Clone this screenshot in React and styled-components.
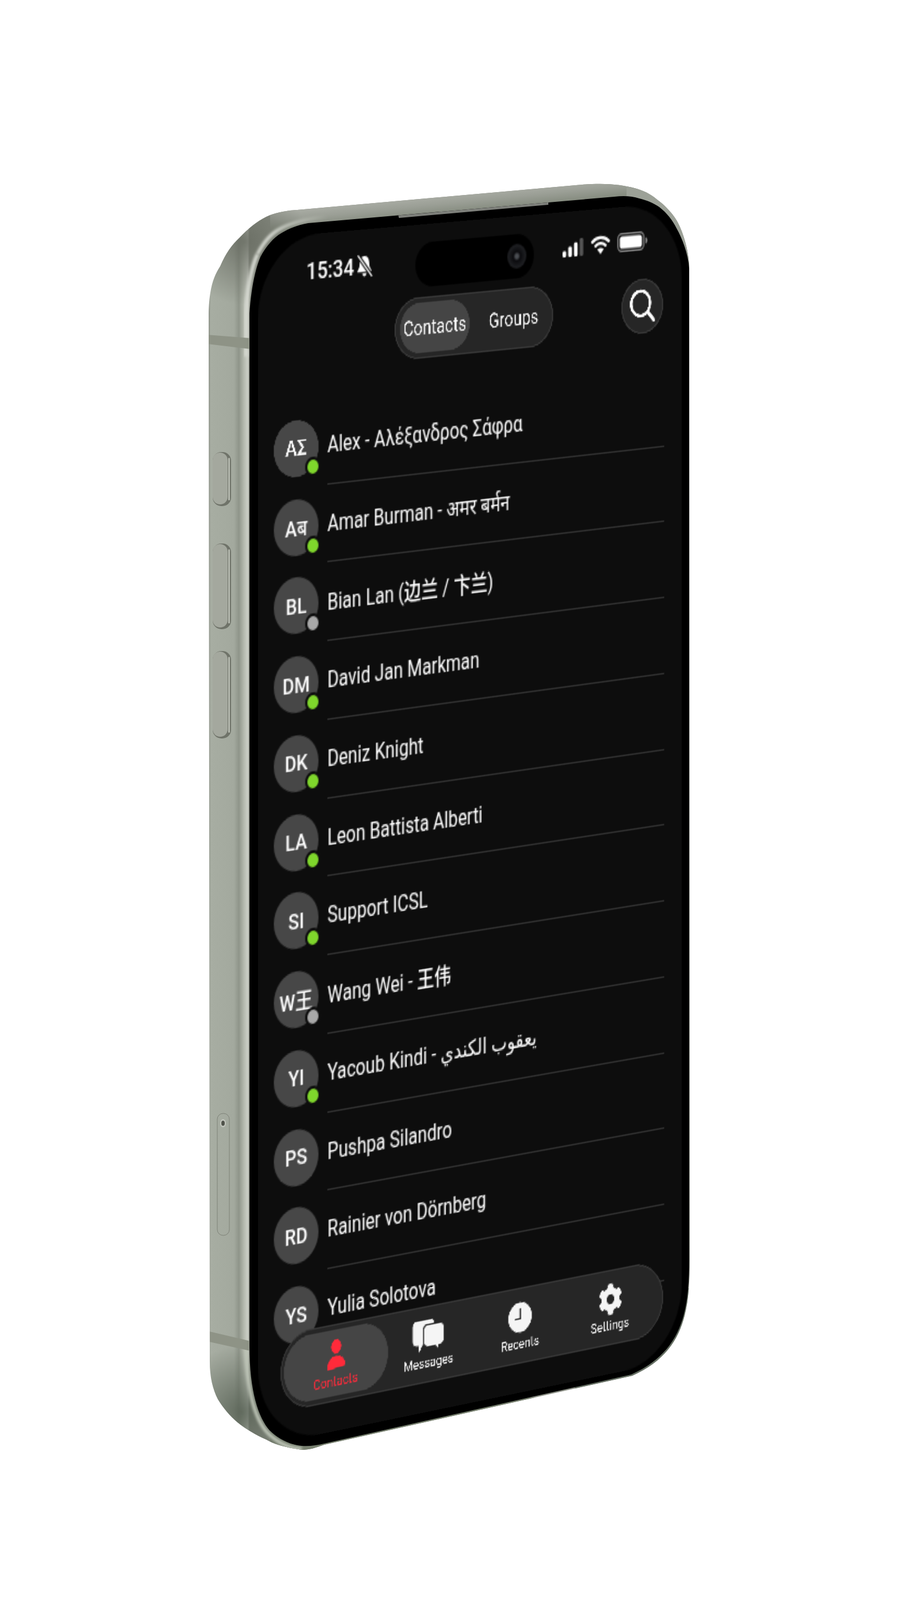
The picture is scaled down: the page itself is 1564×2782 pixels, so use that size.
import styled, { createGlobalStyle } from 'styled-components';
import { FaCog } from 'react-icons/fa';

const SCREEN_W = 393;
const SCREEN_H = 852;

// maps the flat 393x852 screen onto its corners in the photo (TL, TR, BR, BL)
function quadToMatrix(w, h, [x0, y0], [x1, y1], [x2, y2], [x3, y3]) {
  const dx1 = x1 - x2;
  const dx2 = x3 - x2;
  const sx = x0 - x1 + x2 - x3;
  const dy1 = y1 - y2;
  const dy2 = y3 - y2;
  const sy = y0 - y1 + y2 - y3;
  const den = dx1 * dy2 - dx2 * dy1;
  const g = (sx * dy2 - dx2 * sy) / den;
  const k = (dx1 * sy - sx * dy1) / den;
  const a = x1 - x0 + g * x1;
  const b = x3 - x0 + k * x3;
  const d = y1 - y0 + g * y1;
  const e = y3 - y0 + k * y3;
  return `matrix3d(${a / w},${d / w},0,${g / w},${b / h},${e / h},0,${k / h},0,0,1,0,${x0},${y0},0,1)`;
}

const screenTransform = quadToMatrix(
  SCREEN_W,
  SCREEN_H,
  [449, 415],
  [1186, 351],
  [1186, 2363],
  [449, 2516]
);

const GlobalStyle = createGlobalStyle`
  html, body {
    margin: 0;
    padding: 0;
    background: #fff;
  }
`;

const Stage = styled.div`
  position: relative;
  width: 1564px;
  height: 2782px;
  overflow: hidden;
  background: #fff;
`;

const PhoneArt = styled.svg`
  display: block;
  width: 1564px;
  height: 2782px;
`;

const Screen = styled.div`
  position: absolute;
  left: 0;
  top: 0;
  width: ${SCREEN_W}px;
  height: ${SCREEN_H}px;
  transform-origin: 0 0;
  transform: ${screenTransform};
  border-radius: 56px;
  overflow: hidden;
  background: #0d0d0d;
  color: #fff;
  font-family: Roboto, 'Noto Sans', 'Noto Sans CJK SC', 'DejaVu Sans', sans-serif;
`;

const StatusBar = styled.div`
  display: grid;
  grid-template-columns: 141.5px 110px 1fr;
  height: 52px;
`;

const TimeBlock = styled.div`
  display: flex;
  align-items: center;
  gap: 2px;
  height: 20px;
  margin-top: 16px;
  padding-left: 43px;
  font-size: 17px;
  font-weight: 500;
`;

const Island = styled.div`
  display: flex;
  align-items: center;
  justify-content: flex-end;
  height: 32px;
  margin-top: 13px;
  padding-right: 7px;
  border-radius: 17px;
  background: #000;
`;

const Lens = styled.div`
  width: 18px;
  height: 18px;
  border-radius: 50%;
  background: radial-gradient(circle at 50% 50%, #4a4d52 0 10%, #0b0b0e 26%, #1c1d20 60%, #0a0a0a 100%);
`;

const StatusIcons = styled.div`
  display: flex;
  align-items: center;
  gap: 7px;
  height: 14px;
  margin-top: 19px;
  padding-left: 27px;
`;

const Header = styled.div`
  display: grid;
  grid-template-columns: 1fr auto 1fr;
  align-items: start;
  height: 70.9px;
  padding: 0 18px;
`;

const Segmented = styled.div`
  grid-column: 2;
  display: flex;
  align-items: center;
  width: 147px;
  height: 44px;
  padding: 0 4px;
  box-sizing: border-box;
  border: 1px solid #3a3a3a;
  border-radius: 22px;
  background: #262626;
`;

const Segment = styled.div`
  display: flex;
  align-items: center;
  justify-content: center;
  flex: ${(props) => (props.$active ? '0 0 64px' : '1')};
  height: 36px;
  padding-left: ${(props) => (props.$active ? '0' : '9px')};
  border-radius: 18px;
  background: ${(props) => (props.$active ? '#454545' : 'transparent')};
  font-size: 14.5px;
`;

const SearchButton = styled.div`
  grid-column: 3;
  justify-self: end;
  display: flex;
  align-items: center;
  justify-content: center;
  width: 40px;
  height: 40px;
  margin-top: 2px;
  box-sizing: border-box;
  border: 1px solid #3a3a3a;
  border-radius: 50%;
  background: #262626;
`;

const List = styled.div`
  padding-left: 14px;
`;

const Row = styled.div`
  display: flex;
  align-items: center;
  height: 55.75px;
`;

const Avatar = styled.div`
  position: relative;
  flex: none;
  display: flex;
  align-items: center;
  justify-content: center;
  width: 40px;
  height: 40px;
  border-radius: 50%;
  background: #474747;
  font-size: 16px;
  font-weight: 500;
`;

const Presence = styled.span`
  position: absolute;
  right: -1.5px;
  bottom: -1px;
  width: 10px;
  height: 10px;
  border: 2px solid #0d0d0d;
  border-radius: 50%;
  background: ${(props) => (props.$online ? '#7fd62c' : '#a8a8a8')};
`;

const RowBody = styled.div`
  flex: 1;
  display: flex;
  align-items: center;
  align-self: stretch;
  margin: 0 17px 0 8px;
  border-bottom: 1px solid #343434;
  font-size: 15.7px;
  font-weight: 450;
  white-space: nowrap;
`;

const TabBar = styled.div`
  position: absolute;
  left: 19.5px;
  bottom: 21px;
  display: flex;
  align-items: center;
  width: 355px;
  height: 55px;
  padding: 0 2px;
  box-sizing: border-box;
  border: 1px solid #393939;
  border-radius: 28px;
  background: #262626;
`;

const Tab = styled.div`
  flex: none;
  display: flex;
  flex-direction: column;
  align-items: center;
  justify-content: center;
  gap: 2px;
  width: ${(props) => (props.$active ? '94px' : '85px')};
  height: 47px;
  margin-right: ${(props) => (props.$active ? '-5px' : '0')};
  border-radius: 24px;
  background: ${(props) => (props.$active ? '#454545' : 'transparent')};
  color: ${(props) => (props.$active ? '#ff2a3a' : '#fff')};
`;

const TabIcon = styled.div`
  display: flex;
  align-items: center;
  justify-content: center;
  height: 24px;
  color: ${(props) => (props.$active ? '#ff2a3a' : '#f5f5f5')};
`;

const TabLabel = styled.div`
  font-size: 10px;
  line-height: 11px;
`;

const contacts = [
  { initials: 'AΣ', name: 'Alex - Αλέξανδρος Σάφρα', status: 'online' },
  { initials: 'Aब', name: 'Amar Burman - अमर बर्मन', status: 'online' },
  { initials: 'BL', name: 'Bian Lan (边兰 / 卞兰)', status: 'away' },
  { initials: 'DM', name: 'David Jan Markman', status: 'online' },
  { initials: 'DK', name: 'Deniz Knight', status: 'online' },
  { initials: 'LA', name: 'Leon Battista Alberti', status: 'online' },
  { initials: 'SI', name: 'Support ICSL', status: 'online' },
  { initials: 'W王', name: 'Wang Wei - 王伟', status: 'away' },
  { initials: 'YI', name: 'Yacoub Kindi - يعقوب الكندي', status: 'online' },
  { initials: 'PS', name: 'Pushpa Silandro' },
  { initials: 'RD', name: 'Rainier von Dörnberg' },
  { initials: 'YS', name: 'Yulia Solotova' },
];

const SIDE_BUTTONS = [
  { y: 786, h: 94 },
  { y: 945, h: 149 },
  { y: 1132, h: 152 },
];

const BODY =
  'M363 545C364 500 372 480 383 463C393 440 403 426 417 413C432 397 447 385 463 377C480 369 500 366 517 365L1013 321C1050 318 1080 320 1107 328C1125 333 1135 340 1147 350C1160 360 1170 372 1177 383C1187 400 1197 430 1199 460L1200 2190C1200 2280 1190 2352 1100 2392L564 2512C550 2517 538 2521 525 2521C505 2518 480 2513 463 2503C445 2495 428 2485 413 2473C400 2462 388 2448 379 2433C370 2415 365 2395 365 2367Z';
const BEZEL =
  'M434 545C436 510 443 470 453 447C463 428 476 413 490 405C505 396 520 391 536 388L1069 342C1085 340 1100 341 1112 345C1125 348 1137 353 1147 360C1160 370 1170 383 1177 397C1187 415 1197 440 1199 467L1199 2190C1199 2278 1188 2350 1098 2390L564 2510C552 2513 538 2515 525 2514C505 2512 485 2503 469 2487C450 2465 434 2420 434 2340Z';

function Phone() {
  return (
    <PhoneArt viewBox="0 0 1564 2782" aria-hidden="true">
      <defs>
        <linearGradient id="rail" gradientUnits="userSpaceOnUse" x1="363" y1="0" x2="434" y2="0">
          <stop offset="0" stopColor="#8b9086" />
          <stop offset="0.05" stopColor="#a7ada2" />
          <stop offset="0.62" stopColor="#a3a99e" />
          <stop offset="0.74" stopColor="#8f958a" />
          <stop offset="0.86" stopColor="#b3b8ad" />
          <stop offset="0.96" stopColor="#cdd0c8" />
          <stop offset="1" stopColor="#8a8e84" />
        </linearGradient>
        <linearGradient id="topBand" gradientUnits="userSpaceOnUse" x1="780" y1="338" x2="783" y2="368">
          <stop offset="0" stopColor="#a9aca4" />
          <stop offset="0.5" stopColor="#9b9f96" />
          <stop offset="1" stopColor="#888e82" />
        </linearGradient>
        <linearGradient id="cornerGlint" gradientUnits="userSpaceOnUse" x1="470" y1="0" x2="570" y2="0">
          <stop offset="0" stopColor="#d3d6ce" />
          <stop offset="1" stopColor="#d3d6ce" stopOpacity="0" />
        </linearGradient>
        <radialGradient id="cornerTop" gradientUnits="userSpaceOnUse" cx="425" cy="420" r="110">
          <stop offset="0" stopColor="#666a60" stopOpacity="0.85" />
          <stop offset="1" stopColor="#666a60" stopOpacity="0" />
        </radialGradient>
        <radialGradient id="cornerBottom" gradientUnits="userSpaceOnUse" cx="420" cy="2455" r="115">
          <stop offset="0" stopColor="#566053" stopOpacity="0.85" />
          <stop offset="1" stopColor="#566053" stopOpacity="0" />
        </radialGradient>
        <filter id="soft" x="-20%" y="-20%" width="140%" height="140%">
          <feGaussianBlur stdDeviation="2.2" />
        </filter>
        <clipPath id="bodyClip">
          <path d={BODY} />
        </clipPath>
      </defs>
      <path d={BODY} fill="url(#rail)" />
      <g clipPath="url(#bodyClip)">
        <rect x="470" y="300" width="640" height="120" fill="url(#topBand)" />
        <rect x="1090" y="300" width="130" height="200" fill="#9ca197" />
        <rect x="1000" y="2240" width="220" height="180" fill="#667064" />
        <rect x="470" y="2430" width="640" height="110" fill="#77806f" />
        <rect x="350" y="310" width="200" height="230" fill="url(#cornerTop)" />
        <rect x="350" y="2340" width="200" height="200" fill="url(#cornerBottom)" />
        <path
          d="M428 620V545C430 505 437 465 448 442"
          fill="none"
          stroke="#d3d6ce"
          strokeWidth="7"
          filter="url(#soft)"
        />
        <path
          d="M448 442C458 422 472 406 487 398C505 388 530 381 570 377"
          fill="none"
          stroke="url(#cornerGlint)"
          strokeWidth="6"
          filter="url(#soft)"
        />
        <path
          d="M428 2330C428 2420 445 2470 466 2492C485 2510 505 2519 525 2519"
          fill="none"
          stroke="#bcc3b5"
          strokeWidth="6"
          filter="url(#soft)"
        />
        <polygon points="360,582 436,588 436,607 360,598" fill="#8e9386" />
        <polygon points="360,2314 436,2332 436,2349 360,2332" fill="#8e9386" />
      </g>
      <path d={BEZEL} fill="#000" />
      <polygon points="693,374.5 954,352 954,356 694,379" fill="#7e807b" />
      {SIDE_BUTTONS.map((b) => (
        <g key={b.y}>
          <rect x="370" y={b.y} width="32" height={b.h} rx="15" fill="#6f7369" />
          <rect x="397" y={b.y + 10} width="3" height={b.h - 20} rx="1.5" fill="#b4b8ae" />
          <rect x="370" y={b.y + 1} width="26" height={b.h - 4} rx="13" fill="#a4a89e" />
        </g>
      ))}
      <rect x="378" y="1936" width="21" height="212" rx="10" fill="none" stroke="#7f8379" strokeWidth="1" />
      <ellipse cx="388" cy="1953" rx="5" ry="7" fill="#c4c7bf" />
      <ellipse cx="388" cy="1953" rx="3" ry="4.5" fill="#4f524a" />
    </PhoneArt>
  );
}

function BellOff() {
  return (
    <svg width="15" height="16" viewBox="0 0 15 16">
      <path d="M7.5 1C4.8 1 3.4 3 3.2 5.6L2.9 8.6L1.2 11.4C1 11.9 1.2 12.3 1.8 12.3H13.2C13.8 12.3 14 11.9 13.8 11.4L12.1 8.6L11.8 5.6C11.6 3 10.2 1 7.5 1Z" fill="#fff" />
      <path d="M5.6 13.2H9.4C9.2 14.6 8.5 15.4 7.5 15.4S5.8 14.6 5.6 13.2Z" fill="#fff" />
      <path d="M1.8 0.6L14 15.4" stroke="#0d0d0d" strokeWidth="3.2" />
      <path d="M1.8 0.6L14 15.4" stroke="#fff" strokeWidth="1.2" strokeLinecap="round" />
    </svg>
  );
}

function Signal() {
  return (
    <svg width="20" height="13" viewBox="0 0 20 13">
      <rect x="0" y="8.5" width="3.4" height="4.5" rx="1.2" fill="#fff" />
      <rect x="5.4" y="5.5" width="3.4" height="7.5" rx="1.2" fill="#fff" />
      <rect x="10.8" y="2.8" width="3.4" height="10.2" rx="1.2" fill="#fff" />
      <rect x="16.2" y="0" width="3.4" height="13" rx="1.2" fill="#555" />
    </svg>
  );
}

function Wifi() {
  return (
    <svg width="18" height="14" viewBox="0 0 18 14">
      <path d="M1.2 4.8C5.6 .8 12.4 .8 16.8 4.8" fill="none" stroke="#fff" strokeWidth="2.3" strokeLinecap="round" />
      <path d="M4.2 7.9C6.9 5.6 11.1 5.6 13.8 7.9" fill="none" stroke="#fff" strokeWidth="2.2" strokeLinecap="round" />
      <path d="M9 14L5.9 10.6C7.6 9.2 10.4 9.2 12.1 10.6Z" fill="#fff" />
    </svg>
  );
}

function Battery() {
  return (
    <svg width="29" height="14" viewBox="0 0 29 14">
      <rect x="0.6" y="0.6" width="24.8" height="12.8" rx="3.6" fill="none" stroke="#8c8c8c" strokeWidth="1.1" />
      <rect x="2.4" y="2.4" width="21.2" height="9.2" rx="2.2" fill="#fff" />
      <path d="M27 4.6C28.2 5 28.8 6 28.8 7S28.2 9 27 9.4Z" fill="#8c8c8c" />
    </svg>
  );
}

function SearchIcon() {
  return (
    <svg width="28" height="28" viewBox="0 0 26 26">
      <circle cx="11.5" cy="11" r="8.4" fill="none" stroke="#fff" strokeWidth="2.2" />
      <path d="M17.6 17L23 23" fill="none" stroke="#fff" strokeWidth="2.6" strokeLinecap="round" />
    </svg>
  );
}

function PersonIcon() {
  return (
    <svg width="18" height="21" viewBox="0 0 18 21" fill="currentColor">
      <ellipse cx="9" cy="5" rx="4.6" ry="5" />
      <path d="M1 21C.4 15.5 4 11.5 9 11.5S17.6 15.5 17 19.4C12 20 6 20.8 1 21Z" />
    </svg>
  );
}

function MessagesIcon() {
  return (
    <svg width="30" height="24" viewBox="0 0 30 24">
      <path
        d="M4 1H17C19 1 20.5 2.3 20.5 4.5V15C20.5 17 19 18.5 17 18.5H9.5L6.5 23.5L5.8 18.5H4C2 18.5 .5 17 .5 15V4.5C.5 2.3 2 1 4 1Z"
        fill="#f5f5f5"
      />
      <path
        d="M14 4.5H26C28.2 4.5 29.5 5.8 29.5 8V17C29.5 19 28.2 20.3 26 20.3H25L24.2 24L20.5 20.3H14C11.8 20.3 10.5 19 10.5 17V8C10.5 5.8 11.8 4.5 14 4.5Z"
        fill="#f5f5f5"
        stroke="#262626"
        strokeWidth="1.3"
      />
    </svg>
  );
}

function ClockIcon() {
  return (
    <svg width="22" height="23" viewBox="0 0 22 22">
      <circle cx="11" cy="11" r="11" fill="#f5f5f5" />
      <path d="M11.4 4.6V12H6.4" fill="none" stroke="#262626" strokeWidth="1.7" />
    </svg>
  );
}

const tabs = [
  { label: 'Contacts', icon: <PersonIcon />, active: true },
  { label: 'Messages', icon: <MessagesIcon /> },
  { label: 'Recents', icon: <ClockIcon /> },
  { label: 'Settings', icon: <FaCog size={23} /> },
];

function App() {
  return (
    <>
      <GlobalStyle />
      <Stage>
        <Phone />
        <Screen>
          <StatusBar>
            <TimeBlock>
              15:34 <BellOff />
            </TimeBlock>
            <Island>
              <Lens />
            </Island>
            <StatusIcons>
              <Signal />
              <Wifi />
              <Battery />
            </StatusIcons>
          </StatusBar>
          <Header>
            <Segmented>
              <Segment $active>Contacts</Segment>
              <Segment>Groups</Segment>
            </Segmented>
            <SearchButton>
              <SearchIcon />
            </SearchButton>
          </Header>
          <List>
            {contacts.map((contact) => (
              <Row key={contact.initials}>
                <Avatar>
                  {contact.initials}
                  {contact.status && <Presence $online={contact.status === 'online'} />}
                </Avatar>
                <RowBody>{contact.name}</RowBody>
              </Row>
            ))}
          </List>
          <TabBar>
            {tabs.map((tab) => (
              <Tab key={tab.label} $active={tab.active}>
                <TabIcon $active={tab.active}>{tab.icon}</TabIcon>
                <TabLabel>{tab.label}</TabLabel>
              </Tab>
            ))}
          </TabBar>
        </Screen>
      </Stage>
    </>
  );
}

export default App;
